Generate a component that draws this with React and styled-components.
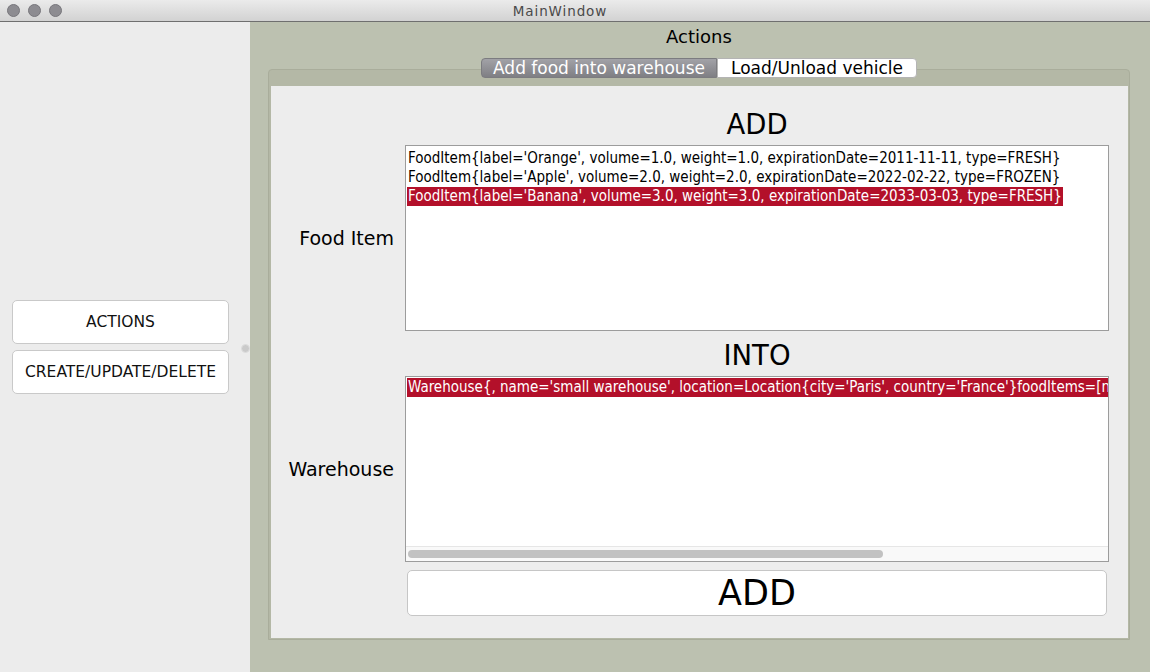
import React from 'react';
import styled, { createGlobalStyle } from 'styled-components';

const GlobalStyle = createGlobalStyle`
    html, body {
        margin: 0;
        padding: 0;
    }
    body {
        font-family: "DejaVu Sans", "Noto Sans", sans-serif;
        color: #000;
    }
`;

const Window = styled.div`
    width: 1150px;
    height: 672px;
    display: flex;
    flex-direction: column;
    overflow: hidden;
`;

const TitleBar = styled.div`
    height: 21px;
    flex-shrink: 0;
    display: flex;
    align-items: center;
    padding-left: 7px;
    background: linear-gradient(#ebebeb, #d2d2d2);
    border-bottom: 1px solid #6f6f6f;
`;

const Lights = styled.div`
    display: flex;
    gap: 8px;
`;

const Light = styled.span`
    width: 11px;
    height: 11px;
    border-radius: 50%;
    background: #8d8c91;
    border: 0.5px solid #77767b;
`;

const WindowTitle = styled.div`
    flex: 1;
    text-align: center;
    padding-right: 92px;
    font-size: 13.5px;
    letter-spacing: 0.9px;
    color: #4a4a4a;
`;

const Body = styled.div`
    flex: 1;
    display: flex;
    min-height: 0;
`;

const LeftPanel = styled.div`
    width: 250px;
    flex-shrink: 0;
    box-sizing: border-box;
    padding-left: 12px;
    background: #ececec;
    display: flex;
    align-items: center;
`;

const ButtonStack = styled.div`
    width: 217px;
    display: flex;
    flex-direction: column;
    gap: 6px;
`;

const SideButton = styled.button`
    height: 44px;
    background: #fff;
    border: 1px solid #c9c9c9;
    border-radius: 5px;
    font-family: "DejaVu Sans", sans-serif;
    font-size: 15.5px;
    color: #111;
    padding: 0;
`;

const Knob = styled.span`
    width: 7px;
    height: 7px;
    margin: 2px 0 0 12px;
    border-radius: 50%;
    background: #cacaca;
    border: 1px solid #dedede;
`;

const RightPanel = styled.div`
    flex: 1;
    background: #bcc1b0;
    display: flex;
    flex-direction: column;
    padding: 0 20px 32px 18px;
`;

const PanelTitle = styled.div`
    padding-top: 4px;
    line-height: 22px;
    text-align: center;
    font-size: 18px;
`;

const TabRow = styled.div`
    display: flex;
    justify-content: center;
    margin: 10px 0 -9px;
    position: relative;
    z-index: 1;
`;

const Tab = styled.div`
    height: 20px;
    line-height: 19px;
    box-sizing: border-box;
    font-size: 17px;
    padding: 0 ${p => (p.active ? '11px' : '13px')};
    color: ${p => (p.active ? '#fff' : '#000')};
    background: ${p => (p.active ? 'linear-gradient(#a2a2a7, #7f7f84)' : '#fff')};
    border: 1px solid ${p => (p.active ? '#7c7c80' : '#b4b4b4')};
    border-radius: ${p => (p.active ? '4px 0 0 4px' : '0 4px 4px 0')};
`;

const Pane = styled.div`
    flex: 1;
    display: flex;
    background: #b4b8a6;
    border: 1px solid #a9ad9b;
    border-radius: 4px 4px 0 0;
    padding: 16px 1px 1px 2px;
`;

const Content = styled.div`
    flex: 1;
    background: #ededed;
    display: grid;
    grid-template-columns: 123px 704px;
    grid-auto-rows: min-content;
    column-gap: 11px;
    padding-top: 18px;
`;

const Heading = styled.div`
    grid-column: 2;
    text-align: center;
    font-size: 27.5px;
    line-height: 41px;
    padding-top: ${p => p.top || 0}px;
`;

const FieldLabel = styled.div`
    grid-column: 1;
    align-self: center;
    text-align: right;
    font-size: 19px;
`;

const ListBox = styled.div`
    grid-column: 2;
    height: 186px;
    box-sizing: border-box;
    background: #fff;
    border: 1px solid #9c9c9c;
    display: flex;
    flex-direction: column;
    overflow: hidden;
`;

const Rows = styled.div`
    flex: 1;
    overflow: hidden;
    padding: ${p => p.pad || '3px 1px 0'};
`;

const Row = styled.div`
    width: max-content;
    white-space: nowrap;
    font-family: "DejaVu Sans Condensed", "DejaVu Sans", sans-serif;
    font-stretch: condensed;
    font-size: 15px;
    line-height: 19px;
    padding: 0 1px;
    color: ${p => (p.selected ? '#fff' : '#000')};
    background: ${p => (p.selected ? '#b3102a' : 'transparent')};
`;

const ScrollTrack = styled.div`
    height: 15px;
    box-sizing: border-box;
    border-top: 1px solid #e6e6e6;
    background: #f9f9f9;
    padding: 3px 2px 0;
`;

const ScrollThumb = styled.div`
    width: ${p => p.size}px;
    height: 8px;
    border-radius: 4px;
    background: #c2c2c2;
`;

const AddButton = styled.button`
    grid-column: 2;
    height: 46px;
    margin: 8px 2px 0;
    background: #fff;
    border: 1px solid #c6c6c6;
    border-radius: 5px;
    font-family: "DejaVu Sans", sans-serif;
    font-size: 35px;
    color: #000;
    padding: 0;
`;

const foodItems = [
    "FoodItem{label='Orange', volume=1.0, weight=1.0, expirationDate=2011-11-11, type=FRESH}",
    "FoodItem{label='Apple', volume=2.0, weight=2.0, expirationDate=2022-02-22, type=FROZEN}",
    "FoodItem{label='Banana', volume=3.0, weight=3.0, expirationDate=2033-03-03, type=FRESH}",
];

const warehouses = [
    "Warehouse{, name='small warehouse', location=Location{city='Paris', country='France'}foodItems=[null, null, null]}",
];

export default function App() {
    return (
        <Window>
            <GlobalStyle />
            <TitleBar>
                <Lights>
                    <Light />
                    <Light />
                    <Light />
                </Lights>
                <WindowTitle>MainWindow</WindowTitle>
            </TitleBar>
            <Body>
                <LeftPanel>
                    <ButtonStack>
                        <SideButton>ACTIONS</SideButton>
                        <SideButton>CREATE/UPDATE/DELETE</SideButton>
                    </ButtonStack>
                    <Knob />
                </LeftPanel>
                <RightPanel>
                    <PanelTitle>Actions</PanelTitle>
                    <TabRow>
                        <Tab active>Add food into warehouse</Tab>
                        <Tab>Load/Unload vehicle</Tab>
                    </TabRow>
                    <Pane>
                        <Content>
                            <Heading>ADD</Heading>
                            <FieldLabel>Food Item</FieldLabel>
                            <ListBox>
                                <Rows>
                                    {foodItems.map((item, i) => (
                                        <Row key={item} selected={i === 2}>{item}</Row>
                                    ))}
                                </Rows>
                            </ListBox>
                            <Heading top={4}>INTO</Heading>
                            <FieldLabel>Warehouse</FieldLabel>
                            <ListBox>
                                <Rows pad="1px 1px 0">
                                    {warehouses.map(w => (
                                        <Row key={w} selected>{w}</Row>
                                    ))}
                                </Rows>
                                <ScrollTrack>
                                    <ScrollThumb size={475} />
                                </ScrollTrack>
                            </ListBox>
                            <AddButton>ADD</AddButton>
                        </Content>
                    </Pane>
                </RightPanel>
            </Body>
        </Window>
    );
}
